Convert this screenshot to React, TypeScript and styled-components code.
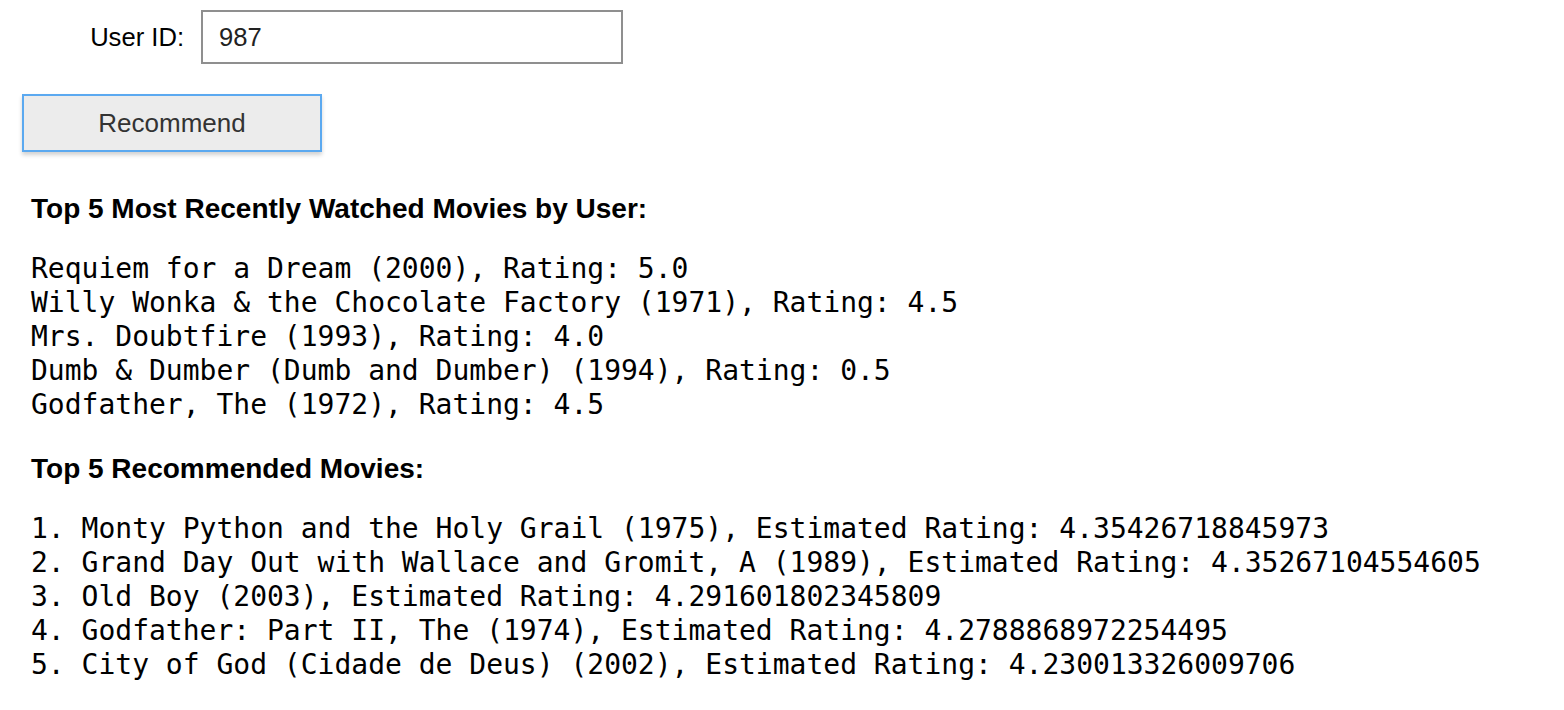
import React from "react";
import styled, { createGlobalStyle } from "styled-components";

const Global = createGlobalStyle`
  html, body { margin: 0; padding: 0; background: #fff; }
  body { font-family: "Liberation Sans", Arial, sans-serif; color: #000; }
`;

const Page = styled.div`
  padding: 10px 0 0 0;
`;

const FormRow = styled.div`
  display: flex;
  align-items: center;
`;

const Label = styled.label`
  width: 201px;
  box-sizing: border-box;
  padding-right: 17px;
  text-align: right;
  font-size: 25.6px;
  color: #000;
`;

const Input = styled.input`
  width: 422px;
  height: 54px;
  box-sizing: border-box;
  border: 2px solid #8f8f8f;
  padding: 0 16px;
  font-size: 25.6px;
  font-family: "Liberation Sans", Arial, sans-serif;
  color: #222;
  outline: none;
`;

const ButtonRow = styled.div`
  padding: 30px 0 0 22px;
`;

const Button = styled.button`
  width: 300px;
  height: 58px;
  box-sizing: border-box;
  background: #ececec;
  border: 2px solid #5ba9f0;
  box-shadow: 0 3px 4px rgba(0, 0, 0, 0.18);
  font-size: 26px;
  font-family: "Liberation Sans", Arial, sans-serif;
  color: #333;
  cursor: pointer;
`;

const Section = styled.section`
  padding-left: 31px;
`;

const Heading = styled.h3<{ $top: number }>`
  margin: ${(p) => p.$top}px 0 0 0;
  font-size: 28px;
  line-height: 30px;
  font-weight: bold;
`;

const Lines = styled.pre`
  margin: 28px 0 0 0;
  font-family: "DejaVu Sans Mono", "Liberation Mono", monospace;
  font-size: 28px;
  line-height: 34px;
  color: #000;
`;

const watched = [
  "Requiem for a Dream (2000), Rating: 5.0",
  "Willy Wonka & the Chocolate Factory (1971), Rating: 4.5",
  "Mrs. Doubtfire (1993), Rating: 4.0",
  "Dumb & Dumber (Dumb and Dumber) (1994), Rating: 0.5",
  "Godfather, The (1972), Rating: 4.5",
];

const recommended = [
  "1. Monty Python and the Holy Grail (1975), Estimated Rating: 4.35426718845973",
  "2. Grand Day Out with Wallace and Gromit, A (1989), Estimated Rating: 4.35267104554605",
  "3. Old Boy (2003), Estimated Rating: 4.291601802345809",
  "4. Godfather: Part II, The (1974), Estimated Rating: 4.2788868972254495",
  "5. City of God (Cidade de Deus) (2002), Estimated Rating: 4.230013326009706",
];

export default function App() {
  return (
    <Page>
      <Global />
      <FormRow>
        <Label htmlFor="uid">User ID:</Label>
        <Input id="uid" defaultValue="987" />
      </FormRow>
      <ButtonRow>
        <Button>Recommend</Button>
      </ButtonRow>
      <Section>
        <Heading $top={42}>Top 5 Most Recently Watched Movies by User:</Heading>
        <Lines>{watched.join("\n")}</Lines>
        <Heading $top={32}>Top 5 Recommended Movies:</Heading>
        <Lines>{recommended.join("\n")}</Lines>
      </Section>
    </Page>
  );
}
